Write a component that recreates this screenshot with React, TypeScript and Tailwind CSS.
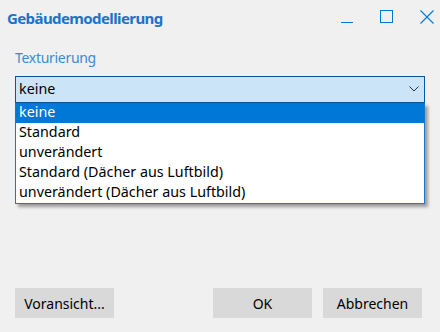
import React from "react";

const options = [
  "keine",
  "Standard",
  "unverändert",
  "Standard (Dächer aus Luftbild)",
  "unverändert (Dächer aus Luftbild)",
];

function WindowControls() {
  return (
    <div className="flex items-start gap-[27px] pt-[10px] pr-[6px]">
      {/* minimize */}
      <div className="w-[12px] h-[13px] flex items-end">
        <div className="w-[12px] h-px bg-[#0078d7]" />
      </div>
      {/* maximize */}
      <div className="w-[13px] h-[13px] border border-[#0078d7]" />
      {/* close */}
      <svg width="14" height="14" viewBox="0 0 14 14" className="block">
        <path d="M0.5 0.5 L13.5 13.5 M13.5 0.5 L0.5 13.5" stroke="#0078d7" strokeWidth="1.1" fill="none" />
      </svg>
    </div>
  );
}

function ComboBox() {
  return (
    <div className="relative">
      <div className="h-[27px] flex items-center justify-between border border-[#0556a5] bg-[#cce4f7] pl-[3px] pr-[5px]">
        <span className="text-[14.3px] text-black leading-none">keine</span>
        <svg width="10" height="6" viewBox="0 0 10 6" className="block">
          <path d="M0.5 0.5 L5 5 L9.5 0.5" stroke="#333" strokeWidth="1" fill="none" />
        </svg>
      </div>

      {/* open dropdown list */}
      <div className="absolute left-0 right-0 top-[27px] bg-white border border-[#1a78c8] border-t-0 shadow-[3px_3px_3px_rgba(0,0,0,0.35)] z-10">
        {options.map((opt, i) => (
          <div
            key={opt}
            className={`h-[20px] flex items-center pl-[3px] text-[14.3px] leading-none ${
              i === 0 ? "bg-[#0078d7] text-white" : "text-black"
            }`}
          >
            {opt}
          </div>
        ))}
      </div>
    </div>
  );
}

export default function App() {
  return (
    <div
      className="w-[440px] h-[332px] bg-[#f0f0f0] flex flex-col overflow-hidden"
      style={{ fontFamily: '"Noto Sans", "Open Sans", sans-serif' }}
    >
      {/* Title bar */}
      <div className="flex justify-between">
        <div className="pl-[7px] pt-[7px] text-[15px] font-bold tracking-[-0.6px] text-[#1a73c7]">
          Gebäudemodellierung
        </div>
        <WindowControls />
      </div>

      {/* Content */}
      <div className="px-[15px] pt-[17px]">
        <div className="text-[14px] tracking-[-0.3px] text-[#3b8ad6] mb-[8px]">Texturierung</div>
        <ComboBox />
      </div>

      {/* Buttons */}
      <div className="mt-auto flex items-center pl-[15px] pr-[18px] pb-[14px]">
        <button className="w-[99px] h-[30px] bg-[#d9d9d9] text-[14px] text-black">
          Voransicht...
        </button>
        <div className="flex-1" />
        <div className="flex gap-[11px]">
          <button className="w-[99px] h-[30px] bg-[#d9d9d9] text-[14px] text-black">OK</button>
          <button className="w-[99px] h-[30px] bg-[#d9d9d9] text-[14px] text-black">Abbrechen</button>
        </div>
      </div>
    </div>
  );
}
